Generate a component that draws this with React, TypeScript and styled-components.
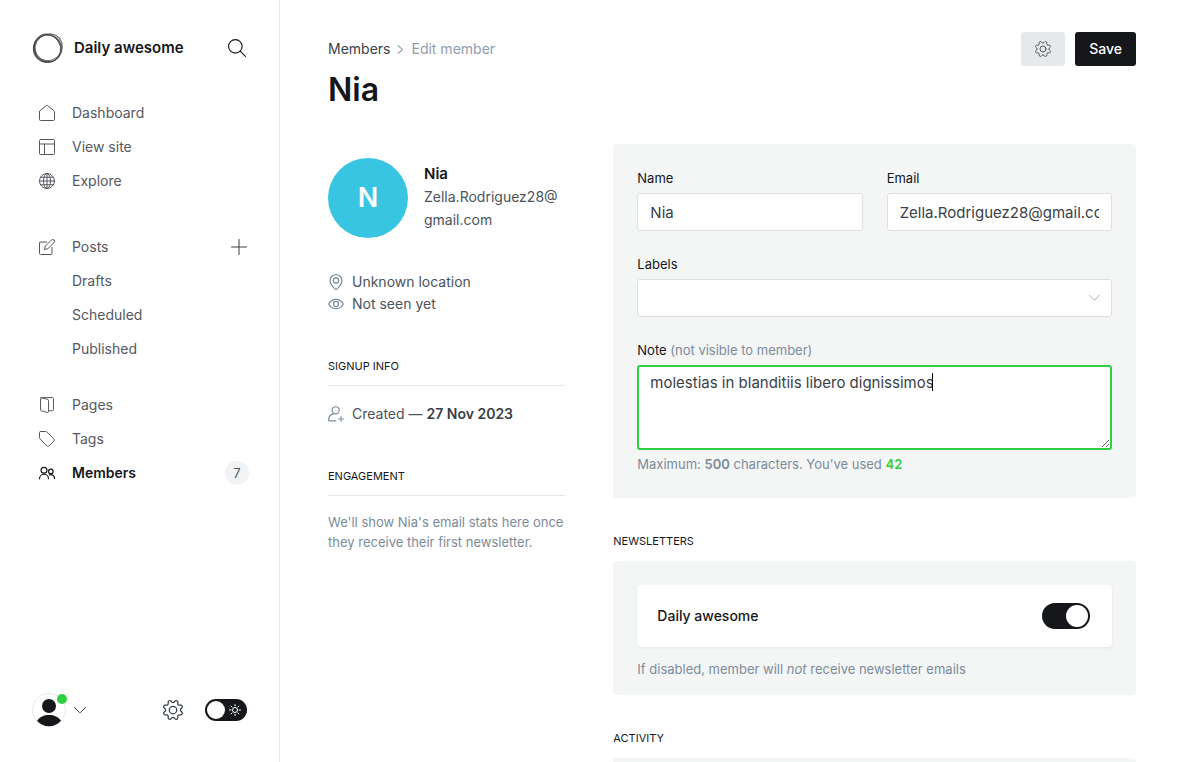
import React from "react";
import styled, { createGlobalStyle, css } from "styled-components";

const c = {
  black: "#15171a",
  dark: "#394047",
  nav: "#54595f",
  text: "#4b535b",
  mid: "#7c8b9a",
  soft: "#8e9cac",
  line: "#e6e9eb",
  panel: "#f4f6f6",
  green: "#30cf43",
};

const GlobalStyle = createGlobalStyle`
  *, *::before, *::after { box-sizing: border-box; }
  body {
    margin: 0;
    background: #fff;
    color: ${c.black};
    font-family: Inter, "Liberation Sans", sans-serif;
    font-size: 14px;
    line-height: 20px;
  }
  button, input, textarea, select { font: inherit; color: inherit; margin: 0; }
  h1, h2, h3, p, ul { margin: 0; padding: 0; font-weight: inherit; }
  a { color: inherit; text-decoration: none; }
  ul { list-style: none; }
`;

/* ---------- icons ---------- */

const Glyph = styled.svg<{ $size?: number }>`
  display: block;
  flex: none;
  width: ${(p) => p.$size ?? 16}px;
  height: ${(p) => p.$size ?? 16}px;
  fill: none;
  stroke: currentColor;
  stroke-width: 1.5;
  stroke-linecap: round;
  stroke-linejoin: round;
  overflow: visible;
`;

type IconProps = { size?: number };

const GearIcon = ({ size }: IconProps) => (
  <Glyph viewBox="0 0 24 24" $size={size} aria-hidden="true">
    <circle cx="12" cy="12" r="4.5" />
    <path d="M10.546 2.438a1.957 1.957 0 0 0 2.908 0L14.4 1.4a1.959 1.959 0 0 1 3.41 1.413l-.071 1.4a1.958 1.958 0 0 0 2.051 2.054l1.4-.071a1.959 1.959 0 0 1 1.41 3.41l-1.042.94a1.96 1.96 0 0 0 0 2.909l1.042.94a1.959 1.959 0 0 1-1.413 3.41l-1.4-.071a1.958 1.958 0 0 0-2.056 2.056l.071 1.4A1.959 1.959 0 0 1 14.4 22.6l-.941-1.041a1.959 1.959 0 0 0-2.908 0L9.606 22.6A1.959 1.959 0 0 1 6.2 21.192l.072-1.4a1.958 1.958 0 0 0-2.056-2.056l-1.4.071A1.958 1.958 0 0 1 1.4 14.4l1.041-.94a1.96 1.96 0 0 0 0-2.909L1.4 9.606A1.958 1.958 0 0 1 2.813 6.2l1.4.071a1.958 1.958 0 0 0 2.058-2.06L6.2 2.81A1.959 1.959 0 0 1 9.606 1.4z" />
  </Glyph>
);

const SearchIcon = () => (
  <Glyph viewBox="0 0 24 24" $size={18} aria-hidden="true">
    <circle cx="9.8" cy="9.8" r="9.05" />
    <path d="M16.2 16.2l7.05 7.05" />
  </Glyph>
);

const HomeIcon = () => (
  <Glyph viewBox="0 0 24 24" aria-hidden="true">
    <path d="M.75 9.8V21.75a1.5 1.5 0 0 0 1.5 1.5h19.5a1.5 1.5 0 0 0 1.5-1.5V9.8a1.5 1.5 0 0 0-.55-1.16L12.95.95a1.5 1.5 0 0 0-1.9 0L1.3 8.64A1.5 1.5 0 0 0 .75 9.8z" />
  </Glyph>
);

const LayoutIcon = () => (
  <Glyph viewBox="0 0 24 24" aria-hidden="true">
    <rect x=".75" y=".75" width="22.5" height="22.5" rx="1.5" />
    <path d="M.75 7.5h22.5M8.25 7.5v15.75" />
  </Glyph>
);

const GlobeIcon = () => (
  <Glyph viewBox="0 0 24 24" aria-hidden="true">
    <circle cx="12" cy="12" r="11.25" />
    <ellipse cx="12" cy="12" rx="5.25" ry="11.25" />
    <path d="M.75 12h22.5M2.25 6.4h19.5M2.25 17.6h19.5M12 .75v22.5" />
  </Glyph>
);

const ComposeIcon = () => (
  <Glyph viewBox="0 0 24 24" aria-hidden="true">
    <path d="M22.4 1.6a2.7 2.7 0 0 0-3.9 0L9.6 10.600l-1.500 5.300 5.300-1.500 9-8.900a2.700 2.700 0 0 0 0-3.900z" />
    <path d="M19.5 12.500v9.250a1.5 1.5 0 0 1-1.5 1.5H2.25a1.5 1.5 0 0 1-1.5-1.5V6a1.5 1.5 0 0 1 1.5-1.5h9.250" />
  </Glyph>
);

const PagesIcon = () => (
  <Glyph viewBox="0 0 24 24" aria-hidden="true">
    <path d="M3.3 1.1l9.900 2.500a1.5 1.5 0 0 1 1.1 1.45v16.700a1.5 1.5 0 0 1-1.9 1.45l-9-2.500a1.5 1.5 0 0 1-1.1-1.45V2.200a1.1 1.1 0 0 1 1-1.1z" />
    <path d="M3.400.9h16.800a1.5 1.5 0 0 1 1.5 1.5v16.700a1.5 1.5 0 0 1-1.5 1.5h-5.800" />
  </Glyph>
);

const TagIcon = () => (
  <Glyph viewBox="0 0 24 24" aria-hidden="true">
    <path d="M2.25.75h7.63a3 3 0 0 1 2.12.88l10.8 10.8a1.5 1.5 0 0 1 0 2.12l-8.25 8.25a1.5 1.5 0 0 1-2.12 0L1.63 12A3 3 0 0 1 .75 9.88V2.25a1.5 1.5 0 0 1 1.5-1.5z" />
  </Glyph>
);

const MembersIcon = () => (
  <Glyph viewBox="0 0 24 24" aria-hidden="true">
    <g strokeWidth="1.8">
      <circle cx="7.5" cy="7.900" r="4.400" />
      <path d="M.75 20.600a6.75 6.75 0 0 1 13.5 0" />
      <circle cx="17.7" cy="9.600" r="3.400" />
      <path d="M15.400 15.100a5.600 5.600 0 0 1 7.9 5.200" />
    </g>
  </Glyph>
);

const PlusIcon = () => (
  <Glyph viewBox="0 0 24 24" aria-hidden="true">
    <path d="M12 .75v22.5M.75 12h22.5" />
  </Glyph>
);

const ChevronDown = ({ size = 12 }: IconProps) => (
  <Glyph viewBox="0 0 24 24" $size={size} aria-hidden="true">
    <path strokeWidth="2" d="M1 7l10.4 10.4a.8.8 0 0 0 1.2 0L23 7" />
  </Glyph>
);

const ChevronRight = () => (
  <Glyph viewBox="0 0 24 24" $size={9} aria-hidden="true">
    <path strokeWidth="3" d="M6 2l10.400 9.200a1.1 1.1 0 0 1 0 1.600L6 22" />
  </Glyph>
);

const PinIcon = () => (
  <Glyph viewBox="0 0 24 24" aria-hidden="true">
    <path d="M12 .75a8.9 8.9 0 0 1 8.9 8.9c0 4.3-5.3 10.8-7.8 13.1a1.6 1.6 0 0 1-2.2 0C8.400 20.450 3.100 13.950 3.100 9.650A8.9 8.9 0 0 1 12 .75z" />
    <circle cx="12" cy="9.700" r="4" />
  </Glyph>
);

const EyeIcon = () => (
  <Glyph viewBox="0 0 24 24" aria-hidden="true">
    <path d="M22.600 11.200c.3.450.3 1.150 0 1.600C21 15.100 17.300 19 12 19S3 15.100 1.400 12.800a1.400 1.400 0 0 1 0-1.600C3 8.900 6.700 5 12 5s9 3.900 10.600 6.200z" />
    <circle cx="12" cy="12" r="3.800" />
  </Glyph>
);

const UserPlusIcon = () => (
  <Glyph viewBox="0 0 24 24" aria-hidden="true">
    <circle cx="11.500" cy="6.500" r="5.400" />
    <path d="M8.500 11.500C4 12.500 1.200 16.200.9 20.500c0 1 .5 1.700 1.400 1.700h9.500M19.500 16v7M16 19.500h7" />
  </Glyph>
);

const SunIcon = () => (
  <Glyph viewBox="0 0 24 24" $size={12} aria-hidden="true">
    <g strokeWidth="2">
      <circle cx="12" cy="12" r="5" />
      <path d="M12 1v3M12 20v3M1 12h3M20 12h3M4.200 4.200l2.100 2.100M17.700 17.700l2.100 2.100M19.800 4.200l-2.100 2.100M6.300 17.700l-2.100 2.100" />
    </g>
  </Glyph>
);

const Logo = () => (
  <Glyph viewBox="0 0 32 32" $size={32} aria-hidden="true">
    <path
      d="M16 1.200a14.700 14.700 0 1 1 0 29.400a14.700 14.700 0 1 1 0-29.400zM15.600 3.800a12.700 12.700 0 1 0 0 25.400a12.700 12.700 0 1 0 0-25.400z"
      fill="#15171a"
      fillRule="evenodd"
      stroke="none"
      opacity=".28"
    />
    <g stroke="#15171a" opacity=".7">
      <ellipse cx="15.300" cy="16.700" rx="13.900" ry="13.700" strokeWidth="1.100" />
      <ellipse cx="16.700" cy="15.300" rx="14.300" ry="12.900" transform="rotate(-40 16.700 15.300)" strokeWidth=".8" />
      <ellipse cx="15.600" cy="15.900" rx="14.400" ry="12.500" transform="rotate(58 15.600 15.900)" strokeWidth=".8" />
      <path d="M3.500 9.500C1.300 14 1.700 20.500 5 24.800c2.700 3.400 7.500 5.100 12 4.800" strokeWidth="1.300" />
    </g>
  </Glyph>
);

/* ---------- shell ---------- */

const Shell = styled.div`
  display: flex;
  height: 100vh;
`;

const Sidebar = styled.nav`
  display: flex;
  flex-direction: column;
  flex: none;
  width: 280px;
  border-right: 1px solid ${c.line};
  padding: 32px;
`;

const PlainButton = styled.button`
  display: flex;
  align-items: center;
  justify-content: center;
  padding: 0;
  border: 0;
  background: none;
  color: ${c.dark};
  cursor: pointer;
`;

const SearchButton = styled(PlainButton)`
  width: 20px;
  color: ${c.black};
`;

const Brand = styled.header`
  display: flex;
  align-items: center;
  gap: 10px;
  height: 32px;
  margin-bottom: 32px;
`;

const BrandName = styled.a`
  flex: 1;
  font-size: 15px;
  font-weight: 600;
`;

const NavList = styled.ul`
  margin-bottom: 32px;
  & + & { margin-bottom: 22px; }
`;

const NavItem = styled.li`
  display: flex;
  align-items: center;
  justify-content: space-between;
  height: 34px;
  padding-left: 7px;
`;

const NavLink = styled.a<{ $active?: boolean; $sub?: boolean }>`
  display: flex;
  align-items: center;
  gap: 17px;
  padding-left: ${(p) => (p.$sub ? 33 : 0)}px;
  color: ${(p) => (p.$active ? c.black : c.nav)};
  font-weight: ${(p) => (p.$active ? 600 : 400)};
`;

const Count = styled.span`
  display: grid;
  place-items: center;
  width: 24px;
  height: 24px;
  margin-right: -2px;
  border-radius: 50%;
  background: #f1f3f4;
  color: ${c.nav};
  font-size: 13px;
`;

const SidebarFoot = styled.footer`
  display: flex;
  align-items: center;
  gap: 22px;
  margin-top: auto;
  height: 40px;
  color: ${c.dark};
`;

const Account = styled(PlainButton)`
  gap: 8px;
  margin-right: auto;
`;

const Avatar = styled.span`
  position: relative;
  display: block;
  width: 34px;
  height: 34px;
`;

const OnlineDot = styled.span`
  position: absolute;
  top: 1px;
  right: -1px;
  width: 10px;
  height: 10px;
  border-radius: 50%;
  background: ${c.green};
`;

const NightLabel = styled.label`
  position: relative;
  display: flex;
  color: #fff;
  cursor: pointer;
  svg { position: absolute; top: 5px; right: 6px; }
`;

const Switch = styled.input<{ $width: number; $height: number }>`
  appearance: none;
  display: flex;
  align-items: center;
  width: ${(p) => p.$width}px;
  height: ${(p) => p.$height}px;
  padding: 2px;
  border-radius: 100px;
  background: ${c.black};
  cursor: pointer;
  &::after {
    content: "";
    height: 100%;
    aspect-ratio: 1;
    border-radius: 50%;
    background: #fff;
  }
  &:checked { justify-content: flex-end; }
`;

/* ---------- main ---------- */

const Main = styled.main`
  flex: 1;
  min-width: 0;
  overflow-y: auto;
  scrollbar-width: none;
  padding: 32px 48px;
`;

const PageHead = styled.header`
  display: flex;
  justify-content: space-between;
  align-items: flex-start;
  height: 112px;
`;

const Crumbs = styled.div`
  display: flex;
  align-items: center;
  gap: 6px;
  height: 34px;
  color: ${c.soft};
  a { color: ${c.dark}; }
`;

const Title = styled.h1`
  font-size: 32px;
  line-height: 40px;
  font-weight: 600;
  margin-top: 4px;
`;

const Actions = styled.div`
  display: flex;
  gap: 10px;
`;

const Button = styled.button<{ $primary?: boolean }>`
  display: flex;
  align-items: center;
  height: 34px;
  padding: 0 14px;
  border: 0;
  border-radius: 3px;
  background: ${(p) => (p.$primary ? c.black : c.line)};
  color: ${(p) => (p.$primary ? "#fff" : c.nav)};
  font-weight: 500;
  cursor: pointer;
`;

const Columns = styled.div`
  display: grid;
  grid-template-columns: repeat(3, minmax(0, 1fr));
  gap: 48px;
  align-items: start;
`;

const Profile = styled.aside`
  padding-top: 14px;
  color: ${c.text};
`;

const Identity = styled.div`
  display: flex;
  gap: 16px;
  height: 80px;
  margin-bottom: 32px;
`;

const Initial = styled.div`
  display: grid;
  place-items: center;
  flex: none;
  width: 80px;
  height: 80px;
  border-radius: 50%;
  background: #37c5e1;
  color: #fff;
  font-size: 27px;
  font-weight: 600;
`;

const Contact = styled.div`
  padding-top: 5px;
  line-height: 23px;
`;

const ContactName = styled.h3`
  color: ${c.black};
  font-size: 15px;
  line-height: 22px;
  font-weight: 600;
`;

const Facts = styled.div`
  padding-top: 1px;
`;

const Fact = styled.p`
  display: flex;
  align-items: center;
  gap: 8px;
  line-height: 22px;
  svg { color: ${c.mid}; stroke-width: 1.8; }
  strong { font-weight: 600; color: ${c.dark}; }
`;

const heading = css`
  color: ${c.black};
  font-size: 11px;
  line-height: 20px;
  text-transform: uppercase;
`;

const SideHeading = styled.h2`
  ${heading}
  margin: 41px 0 16px;
  padding-bottom: 9px;
  border-bottom: 1px solid ${c.line};
`;

const Hint = styled.p`
  color: ${c.mid};
  font-size: 13px;
  line-height: 20px;
  strong { font-weight: 600; }
`;

const Used = styled.strong`
  color: ${c.green};
`;

const Details = styled.div`
  grid-column: span 2;
`;

const SectionHeading = styled.h2`
  ${heading}
  margin: 33px 0 10px;
`;

const Panel = styled.section`
  padding: 24px 24px 16px;
  border-radius: 4px;
  background: ${c.panel};
`;

const Form = styled.form`
  display: grid;
  grid-template-columns: repeat(2, minmax(0, 1fr));
  gap: 23px 24px;
  padding: 24px;
  border-radius: 4px;
  background: ${c.panel};
`;

const Field = styled.div<{ $wide?: boolean }>`
  grid-column: ${(p) => (p.$wide ? "1 / -1" : "auto")};
  ${Hint} { margin-top: 4px; }
`;

const FieldLabel = styled.label`
  display: block;
  margin-bottom: 5px;
  font-size: 13px;
  span { color: ${c.mid}; }
`;

const control = css`
  display: block;
  width: 100%;
  height: 38px;
  padding: 0 12px;
  border: 1px solid #dddfe0;
  border-radius: 3px;
  background: #fff;
  color: ${c.dark};
  font-size: 15px;
  outline: 0;
`;

const TextInput = styled.input`${control}`;
const Select = styled.select`
  ${control}
  appearance: none;
`;

const SelectBox = styled.div`
  position: relative;
  svg {
    position: absolute;
    top: 13px;
    right: 12px;
    color: #9aa5b1;
  }
`;

const NoteBox = styled.div`
  position: relative;
`;

const NoteArea = styled.textarea`
  ${control}
  height: 85px;
  padding: 5px 11px;
  border: 2px solid ${c.green};
  line-height: 22px;
  resize: vertical;
  caret-color: transparent;
`;

const Caret = styled.span`
  position: absolute;
  top: 8px;
  left: 295px;
  width: 1px;
  height: 18px;
  background: #000;
`;

const Newsletter = styled.label`
  display: flex;
  align-items: center;
  justify-content: space-between;
  height: 62px;
  margin-bottom: 12px;
  padding: 0 22px 0 20px;
  border-radius: 4px;
  background: #fff;
  box-shadow: 0 1px 3px rgba(0, 0, 0, 0.07);
  font-weight: 500;
`;

const ActivityPanel = styled(Panel)`
  height: 120px;
`;

export default function App() {
  return (
    <>
      <GlobalStyle />
      <Shell>
        <Sidebar>
          <Brand>
            <Logo />
            <BrandName href="#site">Daily awesome</BrandName>
            <SearchButton aria-label="Search"><SearchIcon /></SearchButton>
          </Brand>
          <NavList>
            <NavItem><NavLink href="#dashboard"><HomeIcon />Dashboard</NavLink></NavItem>
            <NavItem><NavLink href="#site"><LayoutIcon />View site</NavLink></NavItem>
            <NavItem><NavLink href="#explore"><GlobeIcon />Explore</NavLink></NavItem>
          </NavList>
          <NavList>
            <NavItem>
              <NavLink href="#posts"><ComposeIcon />Posts</NavLink>
              <PlainButton aria-label="New post"><PlusIcon /></PlainButton>
            </NavItem>
            <NavItem><NavLink $sub href="#drafts">Drafts</NavLink></NavItem>
            <NavItem><NavLink $sub href="#scheduled">Scheduled</NavLink></NavItem>
            <NavItem><NavLink $sub href="#published">Published</NavLink></NavItem>
          </NavList>
          <NavList>
            <NavItem><NavLink href="#pages"><PagesIcon />Pages</NavLink></NavItem>
            <NavItem><NavLink href="#tags"><TagIcon />Tags</NavLink></NavItem>
            <NavItem>
              <NavLink $active href="#members"><MembersIcon />Members</NavLink>
              <Count>7</Count>
            </NavItem>
          </NavList>
          <SidebarFoot>
            <Account aria-label="Account menu">
              <Avatar>
                <Glyph viewBox="0 0 34 34" $size={34} aria-hidden="true">
                  <circle cx="17" cy="17" r="16.500" stroke="#e6e9eb" strokeWidth="1" />
                  <circle cx="17" cy="13" r="7" fill="#15171a" stroke="none" />
                  <path d="M5 27.800C7.500 24 12 22 17 22s9.500 2 12 5.800A16 16 0 0 1 17 33.300 16 16 0 0 1 5 27.800z" fill="#15171a" stroke="none" />
                </Glyph>
                <OnlineDot />
              </Avatar>
              <ChevronDown />
            </Account>
            <PlainButton aria-label="Settings"><GearIcon size={20} /></PlainButton>
            <NightLabel>
              <Switch type="checkbox" $width={42} $height={22} aria-label="Night shift" />
              <SunIcon />
            </NightLabel>
          </SidebarFoot>
        </Sidebar>

        <Main>
          <PageHead>
            <div>
              <Crumbs>
                <a href="#members">Members</a>
                <ChevronRight />
                <span>Edit member</span>
              </Crumbs>
              <Title>Nia</Title>
            </div>
            <Actions>
              <Button aria-label="Member actions"><GearIcon size={16} /></Button>
              <Button $primary>Save</Button>
            </Actions>
          </PageHead>

          <Columns>
            <Profile>
              <Identity>
                <Initial>N</Initial>
                <Contact>
                  <ContactName>Nia</ContactName>
                  <p>Zella.Rodriguez28@<wbr />gmail.com</p>
                </Contact>
              </Identity>
              <Facts>
                <Fact><PinIcon />Unknown location</Fact>
                <Fact><EyeIcon />Not seen yet</Fact>
              </Facts>
              <SideHeading>Signup info</SideHeading>
              <Facts>
                <Fact><UserPlusIcon /><span>Created — <strong>27 Nov 2023</strong></span></Fact>
              </Facts>
              <SideHeading>Engagement</SideHeading>
              <Hint>We'll show Nia's email stats here once they receive their first newsletter.</Hint>
            </Profile>

            <Details>
              <Form>
                <Field>
                  <FieldLabel htmlFor="name">Name</FieldLabel>
                  <TextInput id="name" type="text" defaultValue="Nia" />
                </Field>
                <Field>
                  <FieldLabel htmlFor="email">Email</FieldLabel>
                  <TextInput id="email" type="text" defaultValue="Zella.Rodriguez28@gmail.com" />
                </Field>
                <Field $wide>
                  <FieldLabel htmlFor="labels">Labels</FieldLabel>
                  <SelectBox>
                    <Select id="labels"><option value="" /></Select>
                    <ChevronDown size={11} />
                  </SelectBox>
                </Field>
                <Field $wide>
                  <FieldLabel htmlFor="note">Note <span>(not visible to member)</span></FieldLabel>
                  <NoteBox>
                    <NoteArea id="note" defaultValue="molestias in blanditiis libero dignissimos" spellCheck={false} />
                    <Caret />
                  </NoteBox>
                  <Hint>Maximum: <strong>500</strong> characters. You’ve used <Used>42</Used></Hint>
                </Field>
              </Form>

              <SectionHeading>Newsletters</SectionHeading>
              <Panel>
                <Newsletter>
                  Daily awesome
                  <Switch type="checkbox" defaultChecked $width={48} $height={26} />
                </Newsletter>
                <Hint>If disabled, member will <em>not</em> receive newsletter emails</Hint>
              </Panel>

              <SectionHeading>Activity</SectionHeading>
              <ActivityPanel />
            </Details>
          </Columns>
        </Main>
      </Shell>
    </>
  );
}
